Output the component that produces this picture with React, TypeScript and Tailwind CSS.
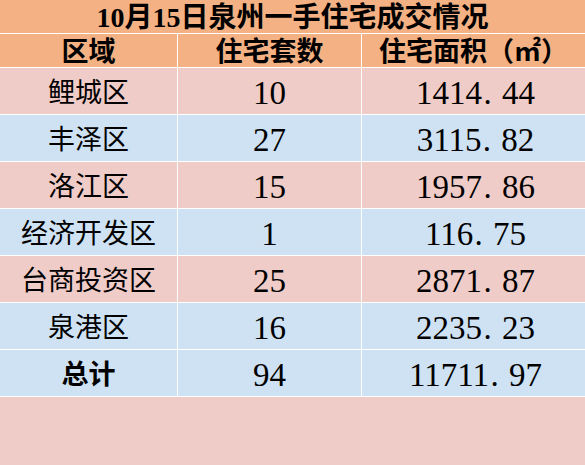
const rows = [
  { area: '鲤城区', count: '10', size: '1414.44', tone: 'pink' },
  { area: '丰泽区', count: '27', size: '3115.82', tone: 'blue' },
  { area: '洛江区', count: '15', size: '1957.86', tone: 'pink' },
  { area: '经济开发区', count: '1', size: '116.75', tone: 'blue' },
  { area: '台商投资区', count: '25', size: '2871.87', tone: 'pink' },
  { area: '泉港区', count: '16', size: '2235.23', tone: 'blue' },
  { area: '总计', count: '94', size: '11711.97', tone: 'blue', total: true },
];

const cjk = { fontFamily: '"Liberation Serif", "Noto Sans CJK SC", serif' };

// the dot in the sheet sits in a wider cell than the digits
function Num({ value }: { value: string }) {
  const [int, frac] = value.split('.');
  return (
    <span>
      {int}
      {frac !== undefined && (
        <>
          <span className="inline-block w-[0.6em] text-left pl-[0.04em]">.</span>
          {frac}
        </>
      )}
    </span>
  );
}

export default function App() {
  return (
    <div className="w-[585px] h-[465px] flex flex-col bg-white text-black" style={cjk}>
      <div className="grid grid-cols-[177px_183px_1fr] gap-px bg-white">
        <div className="col-span-3 h-[33px] bg-[#F4B183] flex items-center justify-center pt-[2px] text-[28px] font-bold leading-none">
          10月15日泉州一手住宅成交情况
        </div>
        {['区域', '住宅套数', '住宅面积（㎡）'].map((h) => (
          <div
            key={h}
            className="h-[33px] bg-[#F4B183] flex items-center justify-center pt-[4px] text-[27px] font-bold leading-none"
          >
            {h}
          </div>
        ))}
        {rows.map((r) => {
          const bg = r.tone === 'pink' ? 'bg-[#F0CCC8]' : 'bg-[#CFE2F3]';
          return (
            <div key={r.area} className="contents">
              <div
                className={`h-[46px] ${bg} flex items-center justify-center pt-[4px] text-[27px] leading-none ${r.total ? 'font-bold' : ''}`}
              >
                {r.area}
              </div>
              <div className={`h-[46px] ${bg} flex items-center justify-center pt-[4px] text-[33px] leading-none`}>
                <Num value={r.count} />
              </div>
              <div className={`h-[46px] ${bg} flex items-center justify-center pt-[4px] pl-[4px] text-[33px] leading-none`}>
                <Num value={r.size} />
              </div>
            </div>
          );
        })}
      </div>
      <div className="flex-1 mt-px bg-[#F0CCC8]" />
    </div>
  );
}
